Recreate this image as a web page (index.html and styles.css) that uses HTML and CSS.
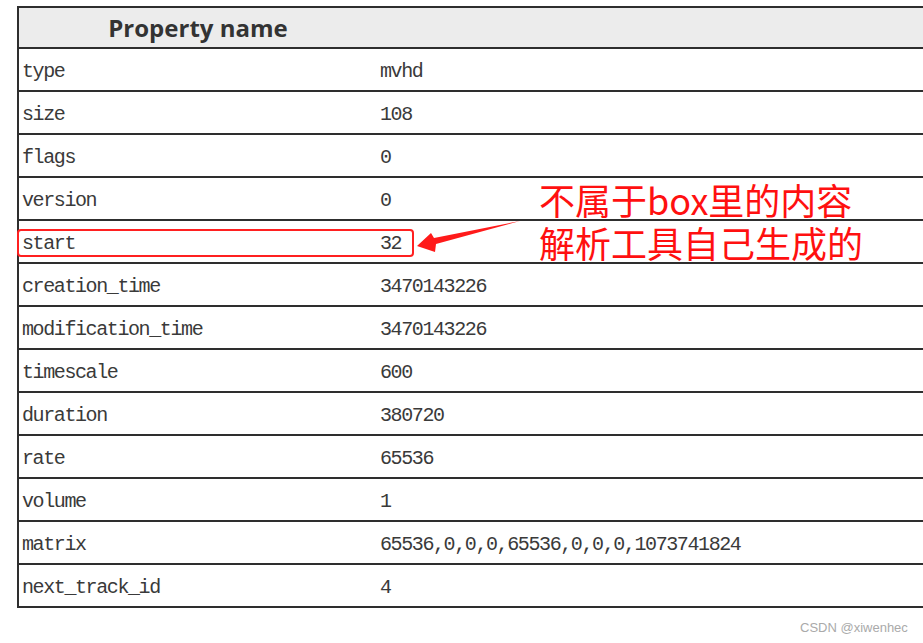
FILE: index.html
```html
<!DOCTYPE html>
<html>
<head>
<meta charset="utf-8">
<link rel="stylesheet" href="styles.css">
</head>
<body>
<div class="page">
  <table class="props">
    <thead>
      <tr><th class="c1">Property name</th><th class="c2"></th></tr>
    </thead>
    <tbody>
      <tr><td>type</td><td>mvhd</td></tr>
      <tr><td>size</td><td>108</td></tr>
      <tr><td>flags</td><td>0</td></tr>
      <tr><td>version</td><td>0</td></tr>
      <tr><td>start</td><td>32</td></tr>
      <tr><td>creation_time</td><td>3470143226</td></tr>
      <tr><td>modification_time</td><td>3470143226</td></tr>
      <tr><td>timescale</td><td>600</td></tr>
      <tr><td>duration</td><td>380720</td></tr>
      <tr><td>rate</td><td>65536</td></tr>
      <tr><td>volume</td><td>1</td></tr>
      <tr><td>matrix</td><td>65536,0,0,0,65536,0,0,0,1073741824</td></tr>
      <tr><td>next_track_id</td><td>4</td></tr>
    </tbody>
  </table>
  <div class="mark-box"></div>
  <svg class="arrow" width="923" height="643" viewBox="0 0 923 643">
    <polygon points="417,246 431,233 434,238 520,221 436,244 435,252" fill="#ff1a1a"/>
  </svg>
  <div class="note">
    <div class="note-line">不属于box里的内容</div>
    <div class="note-line">解析工具自己生成的</div>
  </div>
  <div class="watermark">CSDN @xiwenhec</div>
</div>
</body>
</html>
```
FILE: styles.css
```css
html, body {
  margin: 0;
  padding: 0;
  background: #ffffff;
  overflow: hidden;
}
.page {
  position: relative;
  width: 923px;
  height: 643px;
  padding: 6px 0 0 17px;
  box-sizing: border-box;
  overflow: hidden;
}
.props {
  border-collapse: collapse;
  width: 1000px;
  border-left: 2px solid #2e2e2e;
  border-top: 2px solid #2e2e2e;
  border-bottom: 2px solid #2e2e2e;
  color: #333333;
}
.props th {
  background: #ececec;
  height: 39px;
  padding: 0;
  font-family: "Open Sans", "Noto Sans", sans-serif;
  font-weight: 700;
  font-size: 24px;
  color: #333333;
  text-align: center;
  border-bottom: 2px solid #2e2e2e;
}
.props th.c1 {
  width: 358px;
}
.props th.c1 span {
  position: relative;
}
.props td {
  height: 37px;
  padding: 4px 0 0 3px;
  font-family: "Liberation Mono", monospace;
  font-size: 20px;
  letter-spacing: -1.4px;
  color: #3a3a3a;
  border-bottom: 2px solid #2e2e2e;
  white-space: nowrap;
}
.props tr:last-child td {
  border-bottom: none;
}
.mark-box {
  position: absolute;
  left: 17px;
  top: 229px;
  width: 397px;
  height: 28px;
  box-sizing: border-box;
  border: 2px solid #ff2020;
  border-radius: 4px;
}
.arrow {
  position: absolute;
  left: 0;
  top: 0;
}
.note {
  position: absolute;
  left: 539px;
  top: 178px;
  font-family: "Noto Sans CJK SC", "Noto Sans", sans-serif;
  font-size: 36px;
  color: #ff1010;
  white-space: nowrap;
}
.note-line {
  height: 43px;
  line-height: 43px;
}
.watermark {
  position: absolute;
  left: 800px;
  top: 620px;
  font-family: "Liberation Sans", Arial, sans-serif;
  font-size: 13px;
  color: #aaaaaa;
}
```
